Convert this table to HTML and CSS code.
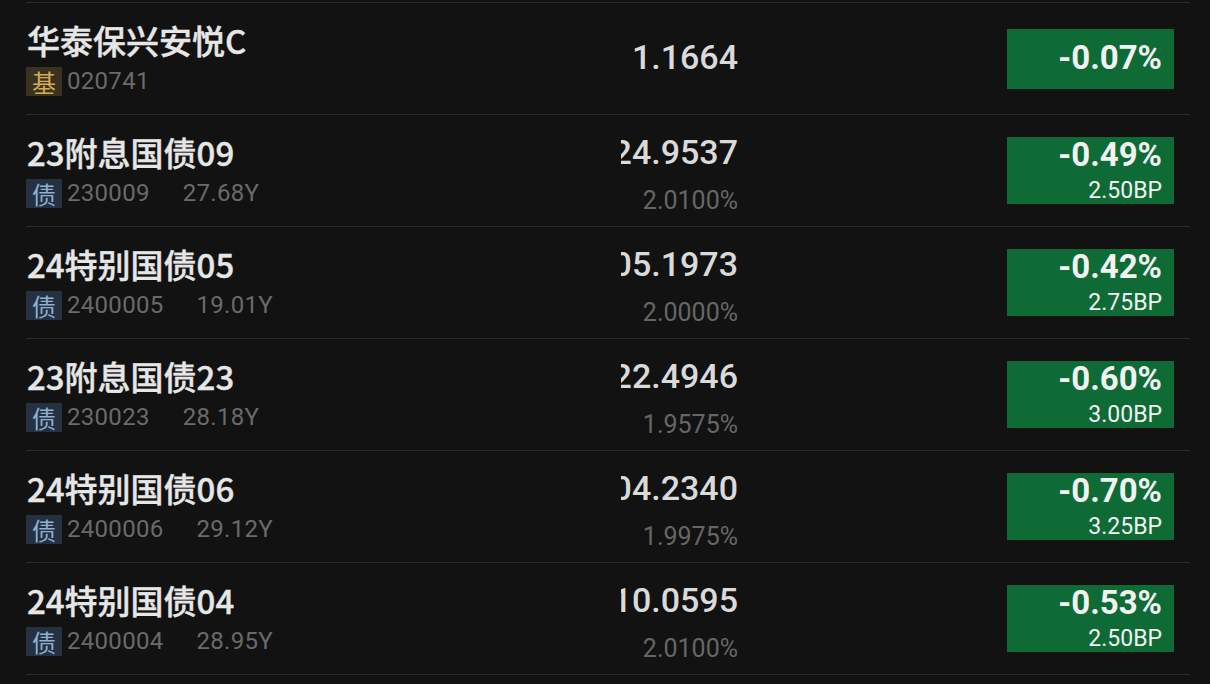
FILE: index.html
```html
<!DOCTYPE html>
<html lang="zh-CN">
<head>
<meta charset="utf-8">
<title>债券列表</title>
<link rel="stylesheet" href="styles.css">
</head>
<body>
<div class="list">
  <div class="row">
    <div class="name">
      <div class="title">华泰保兴安悦C</div>
      <div class="sub"><span class="tag tag-fund">基</span><span class="code">020741</span></div>
    </div>
    <div class="price single"><span class="pv">1.1664</span></div>
    <div class="spacer"></div>
    <div class="chg chg-single"><span class="pct">-0.07%</span></div>
  </div>
  <div class="row">
    <div class="name">
      <div class="title">23附息国债09</div>
      <div class="sub"><span class="tag tag-bond">债</span><span class="code">230009</span><span class="term">27.68Y</span></div>
    </div>
    <div class="price"><span class="pv">124.9537</span><span class="yv">2.0100%</span></div>
    <div class="spacer"></div>
    <div class="chg"><span class="pct">-0.49%</span><span class="bp">2.50BP</span></div>
  </div>
  <div class="row">
    <div class="name">
      <div class="title">24特别国债05</div>
      <div class="sub"><span class="tag tag-bond">债</span><span class="code">2400005</span><span class="term">19.01Y</span></div>
    </div>
    <div class="price"><span class="pv">105.1973</span><span class="yv">2.0000%</span></div>
    <div class="spacer"></div>
    <div class="chg"><span class="pct">-0.42%</span><span class="bp">2.75BP</span></div>
  </div>
  <div class="row">
    <div class="name">
      <div class="title">23附息国债23</div>
      <div class="sub"><span class="tag tag-bond">债</span><span class="code">230023</span><span class="term">28.18Y</span></div>
    </div>
    <div class="price"><span class="pv">122.4946</span><span class="yv">1.9575%</span></div>
    <div class="spacer"></div>
    <div class="chg"><span class="pct">-0.60%</span><span class="bp">3.00BP</span></div>
  </div>
  <div class="row">
    <div class="name">
      <div class="title">24特别国债06</div>
      <div class="sub"><span class="tag tag-bond">债</span><span class="code">2400006</span><span class="term">29.12Y</span></div>
    </div>
    <div class="price"><span class="pv">104.2340</span><span class="yv">1.9975%</span></div>
    <div class="spacer"></div>
    <div class="chg"><span class="pct">-0.70%</span><span class="bp">3.25BP</span></div>
  </div>
  <div class="row">
    <div class="name">
      <div class="title">24特别国债04</div>
      <div class="sub"><span class="tag tag-bond">债</span><span class="code">2400004</span><span class="term">28.95Y</span></div>
    </div>
    <div class="price"><span class="pv">110.0595</span><span class="yv">2.0100%</span></div>
    <div class="spacer"></div>
    <div class="chg"><span class="pct">-0.53%</span><span class="bp">2.50BP</span></div>
  </div>
</div>
</body>
</html>
```
FILE: styles.css
```css
html, body {
  margin: 0;
  padding: 0;
  background: #121212;
  height: 100%;
  overflow: hidden;
}
body {
  padding-top: 2px;
  font-family: Roboto, "Noto Sans CJK SC", sans-serif;
}
.list {
  margin-left: 26px;
  width: 1164px;
  border-top: 1px solid #2a2a2a;
}
.row {
  display: grid;
  grid-template-columns: 595px 117px 1fr 167px;
  padding-right: 16px;
  height: 111px;
  border-bottom: 1px solid #2a2a2a;
  align-items: center;
}
.name {
  display: flex;
  flex-direction: column;
  gap: 7px;
  padding-left: 1px;
  padding-bottom: 1px;
}
.title {
  font-family: "Noto Sans CJK SC", sans-serif;
  font-size: 33px;
  font-weight: 500;
  line-height: 40px;
  color: #e6e6e6;
  white-space: nowrap;
  -webkit-text-stroke: 0.4px #e6e6e6;
}
.sub {
  display: flex;
  align-items: center;
  height: 29px;
  margin-left: -1px;
}
.tag {
  width: 36px;
  height: 29px;
  display: flex;
  align-items: center;
  justify-content: center;
  font-family: "Noto Sans CJK SC", sans-serif;
  font-size: 24px;
  line-height: 29px;
}
.tag-fund {
  background: #3a3120;
  color: #d3ad58;
}
.tag-bond {
  background: #253140;
  color: #8fb0d6;
}
.code {
  margin-left: 5px;
  font-size: 24px;
  color: #6a6a6a;
  line-height: 29px;
  letter-spacing: 0.3px;
}
.term {
  margin-left: 33px;
  font-size: 24px;
  color: #6a6a6a;
  line-height: 29px;
  letter-spacing: 0.3px;
}
.price {
  align-self: start;
  padding-top: 17px;
  display: flex;
  flex-direction: column;
  align-items: flex-end;
  overflow: hidden;
  gap: 14px;
}
.price.single {
  padding-top: 34px;
}
.pv {
  font-size: 34px;
  font-weight: 500;
  line-height: 40px;
  color: #dadada;
  white-space: nowrap;
}
.yv {
  font-size: 25px;
  line-height: 30px;
  color: #666666;
  white-space: nowrap;
}
.chg {
  height: 67px;
  box-sizing: border-box;
  background: #0e6b35;
  display: flex;
  flex-direction: column;
  align-items: flex-end;
  padding: 3px 12px 0 0;
  gap: 8px;
  color: #f2f2f2;
}
.chg-single {
  height: 60px;
  justify-content: center;
  padding: 0 12px 3px 0;
  margin-top: 1px;
}
.pct {
  font-size: 33px;
  font-weight: 700;
  line-height: 30px;
  white-space: nowrap;
}
.bp {
  font-size: 23px;
  line-height: 26px;
  white-space: nowrap;
}
```
